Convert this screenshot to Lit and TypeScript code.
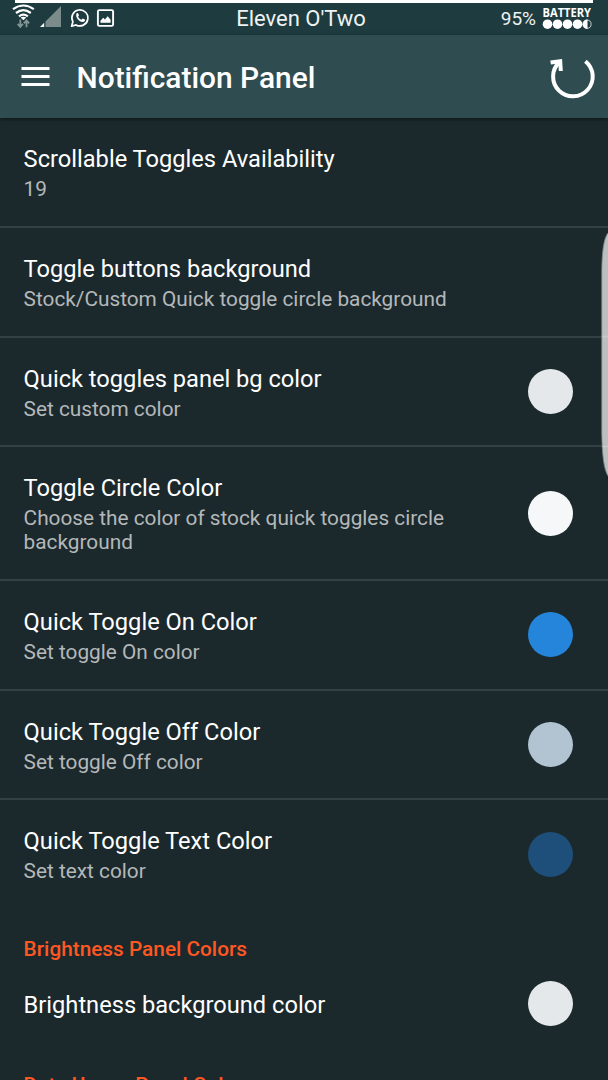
import { LitElement, html, css, svg, nothing } from "lit";
import { customElement, property } from "lit/decorators.js";

@customElement("pref-row")
class PrefRow extends LitElement {
  @property() heading = "";
  @property() summary = "";
  @property() color = "";

  static styles = css`
    :host {
      display: flex;
      align-items: center;
      box-sizing: border-box;
      padding: 0 35px 0 23.6px;
    }
    .text {
      flex: 1;
      min-width: 0;
      padding-top: 2.2px;
    }
    .heading {
      font-size: 23.65px;
      line-height: 28px;
      color: #fff;
      white-space: nowrap;
    }
    .summary {
      font-size: 20.8px;
      line-height: 24px;
      max-width: 440px;
      margin-top: 4px;
      color: #b4b8b9;
    }
    .swatch {
      flex: none;
      width: 45px;
      height: 45px;
      border-radius: 50%;
    }
  `;

  render() {
    return html`
      <div class="text">
        <div class="heading">${this.heading}</div>
        ${this.summary ? html`<div class="summary">${this.summary}</div>` : nothing}
      </div>
      ${this.color ? html`<div class="swatch" style="background:${this.color}"></div>` : nothing}
    `;
  }
}

const ROWS = [
  { heading: "Scrollable Toggles Availability", summary: "19", color: "" },
  { heading: "Toggle buttons background", summary: "Stock/Custom Quick toggle circle background", color: "" },
  { heading: "Quick toggles panel bg color", summary: "Set custom color", color: "#e4e8eb" },
  { heading: "Toggle Circle Color", summary: "Choose the color of stock quick toggles circle background", color: "#f5f7f9", tall: true },
  { heading: "Quick Toggle On Color", summary: "Set toggle On color", color: "#2585da" },
  { heading: "Quick Toggle Off Color", summary: "Set toggle Off color", color: "#b2c3d1" },
  { heading: "Quick Toggle Text Color", summary: "Set text color", color: "#1e4f7a" },
];

const statusIcons = svg`
  <g fill="none" stroke="#fff" stroke-width="2.2">
    <path d="M13 9.2Q23.4 1.8 33.8 9.2" />
    <path d="M16 13Q23.4 7.4 30.8 13" />
    <path d="M19 16.4Q23.4 13 27.8 16.4" />
  </g>
  <path d="M20.6 17.6Q23.4 15.8 26.2 17.6L23.4 20.2Z" fill="#fff" />
  <path d="M20.3 19.5v7M17.7 23.8l2.6 3 2.6-3M26.5 27.2v-6M23.9 23.4l2.6-3 2.6 3" fill="none" stroke="#839695" stroke-width="1.8" />
  <path d="M45.5 27V21.5L61 6V27Z" fill="#7b8c8b" />
  <path d="M40 27L44.2 22.8V27Z" fill="#fff" />
  <path d="M71.6 26.2l1.3-4.4a8 8 0 1 1 3.1 3.1z" fill="none" stroke="#fff" stroke-width="1.7" stroke-linejoin="round" />
  <path d="M76.5 13.4c.9-.8 1.5-.5 1.8.3l.6 1.5c.1.5-.7 1.1-.8 1.5.7 1.4 1.7 2.3 3.3 3 .5-.1 1-1.2 1.5-1.1l1.8.9c.7.3.3 1.5-.4 2-3.4 2.2-9.6-3.8-7.8-8.1z" fill="#fff" />
  <rect x="97.9" y="10.1" width="15.2" height="15.8" rx="1.5" fill="none" stroke="#fff" stroke-width="1.9" />
  <path d="M100.5 22.8v-2l2.7-3 1.7 1.7 2.8-3.2 2.9 3.5v3z" fill="#fff" />
`;

@customElement("app-root")
class AppRoot extends LitElement {
  static styles = css`
    :host {
      display: block;
      position: relative;
      height: 1080px;
      overflow: hidden;
      background: #1b292d;
      font-family: Roboto, sans-serif;
      color: #fff;
    }
    svg {
      display: block;
      flex: none;
    }
    .status {
      display: grid;
      grid-template-columns: 1fr auto 1fr;
      height: 35px;
      background: #1e3c40;
    }
    .charge {
      position: absolute;
      top: 0;
      left: 15px;
      width: 578px;
      height: 3px;
      background: #fff;
    }
    .owner {
      font-size: 22px;
      line-height: 38px;
      color: #eef2f2;
      margin-right: 6px;
    }
    .power {
      display: flex;
      justify-content: flex-end;
      padding-right: 14px;
      gap: 6px;
    }
    .percent {
      font-size: 19px;
      line-height: 37px;
      color: #eef2f2;
    }
    .bar {
      display: flex;
      align-items: center;
      height: 83px;
      background: #2f4d50;
      box-shadow: 0 1px 4px rgba(0, 0, 0, 0.5);
      position: relative;
    }
    .title {
      flex: 1;
      font-size: 29.9px;
      font-weight: 500;
      line-height: 34px;
      margin-top: 3px;
      margin-left: -0.5px;
    }
    pref-row {
      height: 109.7px;
      border-bottom: 2px solid #334145;
    }
    pref-row.first {
      height: 109.9px;
    }
    pref-row.tall {
      height: 133.8px;
    }
    pref-row.last {
      border-bottom-color: transparent;
    }
    pref-row.single {
      height: 85px;
      border-bottom: 0;
    }
    .category {
      padding-left: 23.6px;
      font-size: 20.8px;
      font-weight: 500;
      line-height: 24px;
      padding-top: 27px;
      color: #ff5722;
    }
    .edge {
      position: absolute;
      left: 601px;
      top: 229px;
    }
  `;

  render() {
    return html`
      <div class="status">
        <svg width="125" height="35" viewBox="0 0 125 35">${statusIcons}</svg>
        <div class="owner">Eleven O'Two</div>
        <div class="power">
          <div class="percent">95%</div>
          <svg width="52" height="35" viewBox="0 0 52 35" fill="#fff">
            <text x="0.5" y="17" font-family="Open Sans" font-size="12.2" font-weight="700" textLength="48.5" lengthAdjust="spacingAndGlyphs">BATTERY</text>
            ${[5.5, 15.5, 25.5, 35.5].map((x) => svg`<circle cx=${x} cy="24.2" r="4.8" />`)}
            <path d="M45.5 19.5a4.7 4.7 0 0 0 0 9.4z" />
            <circle cx="45" cy="24.2" r="4.1" fill="none" stroke="#fff" stroke-opacity="0.8" stroke-width="0.9" />
          </svg>
        </div>
      </div>
      <div class="charge"></div>
      <div class="bar">
        <svg width="77" height="83" viewBox="0 0 77 83">
          <path d="M21.5 33.5h28M21.5 41.5h28M21.5 49.5h28" stroke="#fff" stroke-width="2.8" />
        </svg>
        <div class="title">Notification Panel</div>
        <svg width="78" height="83" viewBox="530 35 78 83" fill="none" stroke="#fff" stroke-width="4">
          <path d="M585.4 61.2A19.8 19.8 0 1 1 559.5 62" />
          <path d="M550.6 62.6L560.2 61.2L560.8 71" />
        </svg>
      </div>
      ${ROWS.map(
        (r, i) => html`<pref-row
          class=${r.tall ? "tall" : i === 0 ? "first" : i === ROWS.length - 1 ? "last" : ""}
          .heading=${r.heading}
          .summary=${r.summary}
          .color=${r.color}
        ></pref-row>`
      )}
      <div class="category">Brightness Panel Colors</div>
      <pref-row class="single" .heading=${"Brightness background color"} .color=${"#e4e8eb"}></pref-row>
      <div class="category">Data Usage Panel Colors</div>
      <svg class="edge" width="7" height="250" viewBox="0 0 7 250">
        <path d="M7 4C3 9 .8 22 .8 45V205C1.3 228 3 240 7 247Z" fill="#bbbfbf" />
        <path d="M7 4C3 9 .8 22 .8 45V205C1.3 228 3 240 7 247" fill="none" stroke="#7d8687" stroke-width="0.8" />
        <path d="M1.5 107.5H7M1.5 217.5H7" stroke="#c9cccd" stroke-width="1.5" />
      </svg>
    `;
  }
}
